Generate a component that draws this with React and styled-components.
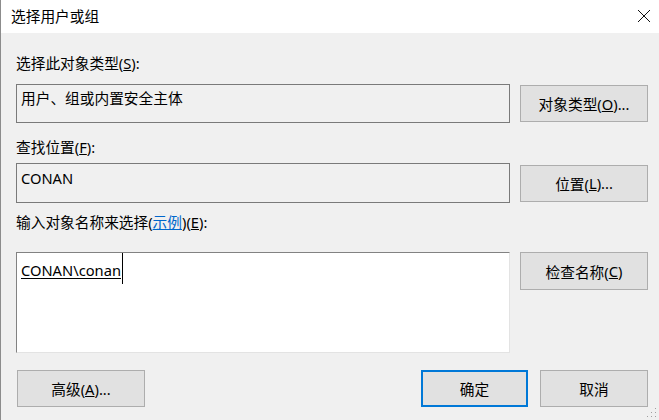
import React from "react";
import styled, { createGlobalStyle } from "styled-components";

const font = `"Noto Sans", "Noto Sans CJK SC", sans-serif`;

const GlobalStyle = createGlobalStyle`
  html, body {
    margin: 0;
    padding: 0;
    background: #f0f0f0;
  }
  * {
    box-sizing: border-box;
  }
`;

const Window = styled.div`
  position: relative;
  width: 659px;
  height: 420px;
  display: flex;
  flex-direction: column;
  background: #f0f0f0;
  border-left: 1px solid #8c8c8c;
  font-family: ${font};
  font-size: 14.7px;
  color: #000;
  overflow: hidden;
`;

const TitleBar = styled.div`
  height: 33px;
  flex: none;
  background: #fff;
  display: flex;
  align-items: center;
  justify-content: space-between;
  padding: 0 8px 1px 10px;
`;

const Title = styled.span`
  font-size: 14.7px;
  line-height: 20px;
`;

const Body = styled.div`
  display: flex;
  flex-direction: column;
  padding: 20px 11px 0 15px;
`;

const Label = styled.div`
  height: 20px;
  line-height: 20px;
  margin-top: ${(p) => p.$mt || 0}px;
  white-space: nowrap;
`;

const Link = styled.span`
  color: #0066cc;
  text-decoration: underline;
`;

const Row = styled.div`
  display: flex;
  gap: 10px;
  align-items: ${(p) => p.$align || "center"};
  margin-top: ${(p) => p.$mt || 0}px;
`;

const Field = styled.div`
  width: 494px;
  height: ${(p) => p.$h}px;
  flex: none;
  line-height: 20px;
  padding: ${(p) => p.$pt}px 4px 0 4px;
  background: ${(p) => (p.$edit ? "#fff" : "#f0f0f0")};
  border: 1px solid #7a7a7a;
  ${(p) =>
    p.$edit &&
    `
    border-top-color: #828282;
    border-left-color: #828282;
    border-right-color: #e3e3e3;
    border-bottom-color: #e3e3e3;
  `}
`;

const Entry = styled.span`
  display: inline-flex;
  align-items: stretch;
`;

const Resolved = styled.span`
  text-decoration: underline;
  text-underline-offset: 2px;
`;

const Caret = styled.span`
  width: 1px;
  margin-top: -7px;
  height: 31px;
  background: #000;
  margin-left: 1px;
`;

const Button = styled.div`
  width: ${(p) => p.$w || 128}px;
  height: ${(p) => p.$h || 37}px;
  flex: none;
  display: flex;
  align-items: center;
  justify-content: center;
  background: #e1e1e1;
  border: ${(p) => (p.$primary ? "2px solid #0078d7" : "1px solid #adadad")};
  white-space: nowrap;
  font-size: 14.7px;
`;

const Footer = styled.div`
  display: flex;
  justify-content: space-between;
  align-items: center;
  margin-top: 17px;
  padding-left: 1px;
`;

const ButtonGroup = styled.div`
  display: flex;
  gap: 12px;
`;

const Grip = styled.svg`
  position: absolute;
  right: 2px;
  bottom: 2px;
`;

const CloseIcon = () => (
  <svg width="14" height="14" viewBox="0 0 14 14">
    <path d="M1 1 L13 13 M13 1 L1 13" stroke="#111" strokeWidth="1" fill="none" />
  </svg>
);

const dots = [
  [9, 1],
  [9, 5],
  [5, 5],
  [9, 9],
  [5, 9],
  [1, 9],
];

export default function App() {
  return (
    <>
      <GlobalStyle />
      <Window>
        <TitleBar>
          <Title>选择用户或组</Title>
          <CloseIcon />
        </TitleBar>
        <Body>
          <Label>
            选择此对象类型(<u>S</u>):
          </Label>
          <Row $mt={11}>
            <Field $h={39} $pt={3}>用户、组或内置安全主体</Field>
            <Button>
              对象类型(<u>O</u>)...
            </Button>
          </Row>

          <Label $mt={14}>
            查找位置(<u>F</u>):
          </Label>
          <Row $mt={6}>
            <Field $h={40} $pt={4}>CONAN</Field>
            <Button>
              位置(<u>L</u>)...
            </Button>
          </Row>

          <Label $mt={9}>
            输入对象名称来选择(<Link>示例</Link>)(<u>E</u>):
          </Label>
          <Row $mt={20} $align="flex-start">
            <Field $h={101} $pt={7} $edit>
              <Entry>
                <Resolved>CONAN\conan</Resolved>
                <Caret />
              </Entry>
            </Field>
            <Button $h={38}>
              检查名称(<u>C</u>)
            </Button>
          </Row>

          <Footer>
            <Button>
              高级(<u>A</u>)...
            </Button>
            <ButtonGroup>
              <Button $w={107} $primary>
                确定
              </Button>
              <Button $w={108}>取消</Button>
            </ButtonGroup>
          </Footer>
        </Body>
        <Grip width="11" height="11" viewBox="0 0 11 11">
          {dots.map(([x, y]) => (
            <rect key={`${x}-${y}`} x={x} y={y} width="1" height="1" fill="#a0a0a0" />
          ))}
        </Grip>
      </Window>
    </>
  );
}
